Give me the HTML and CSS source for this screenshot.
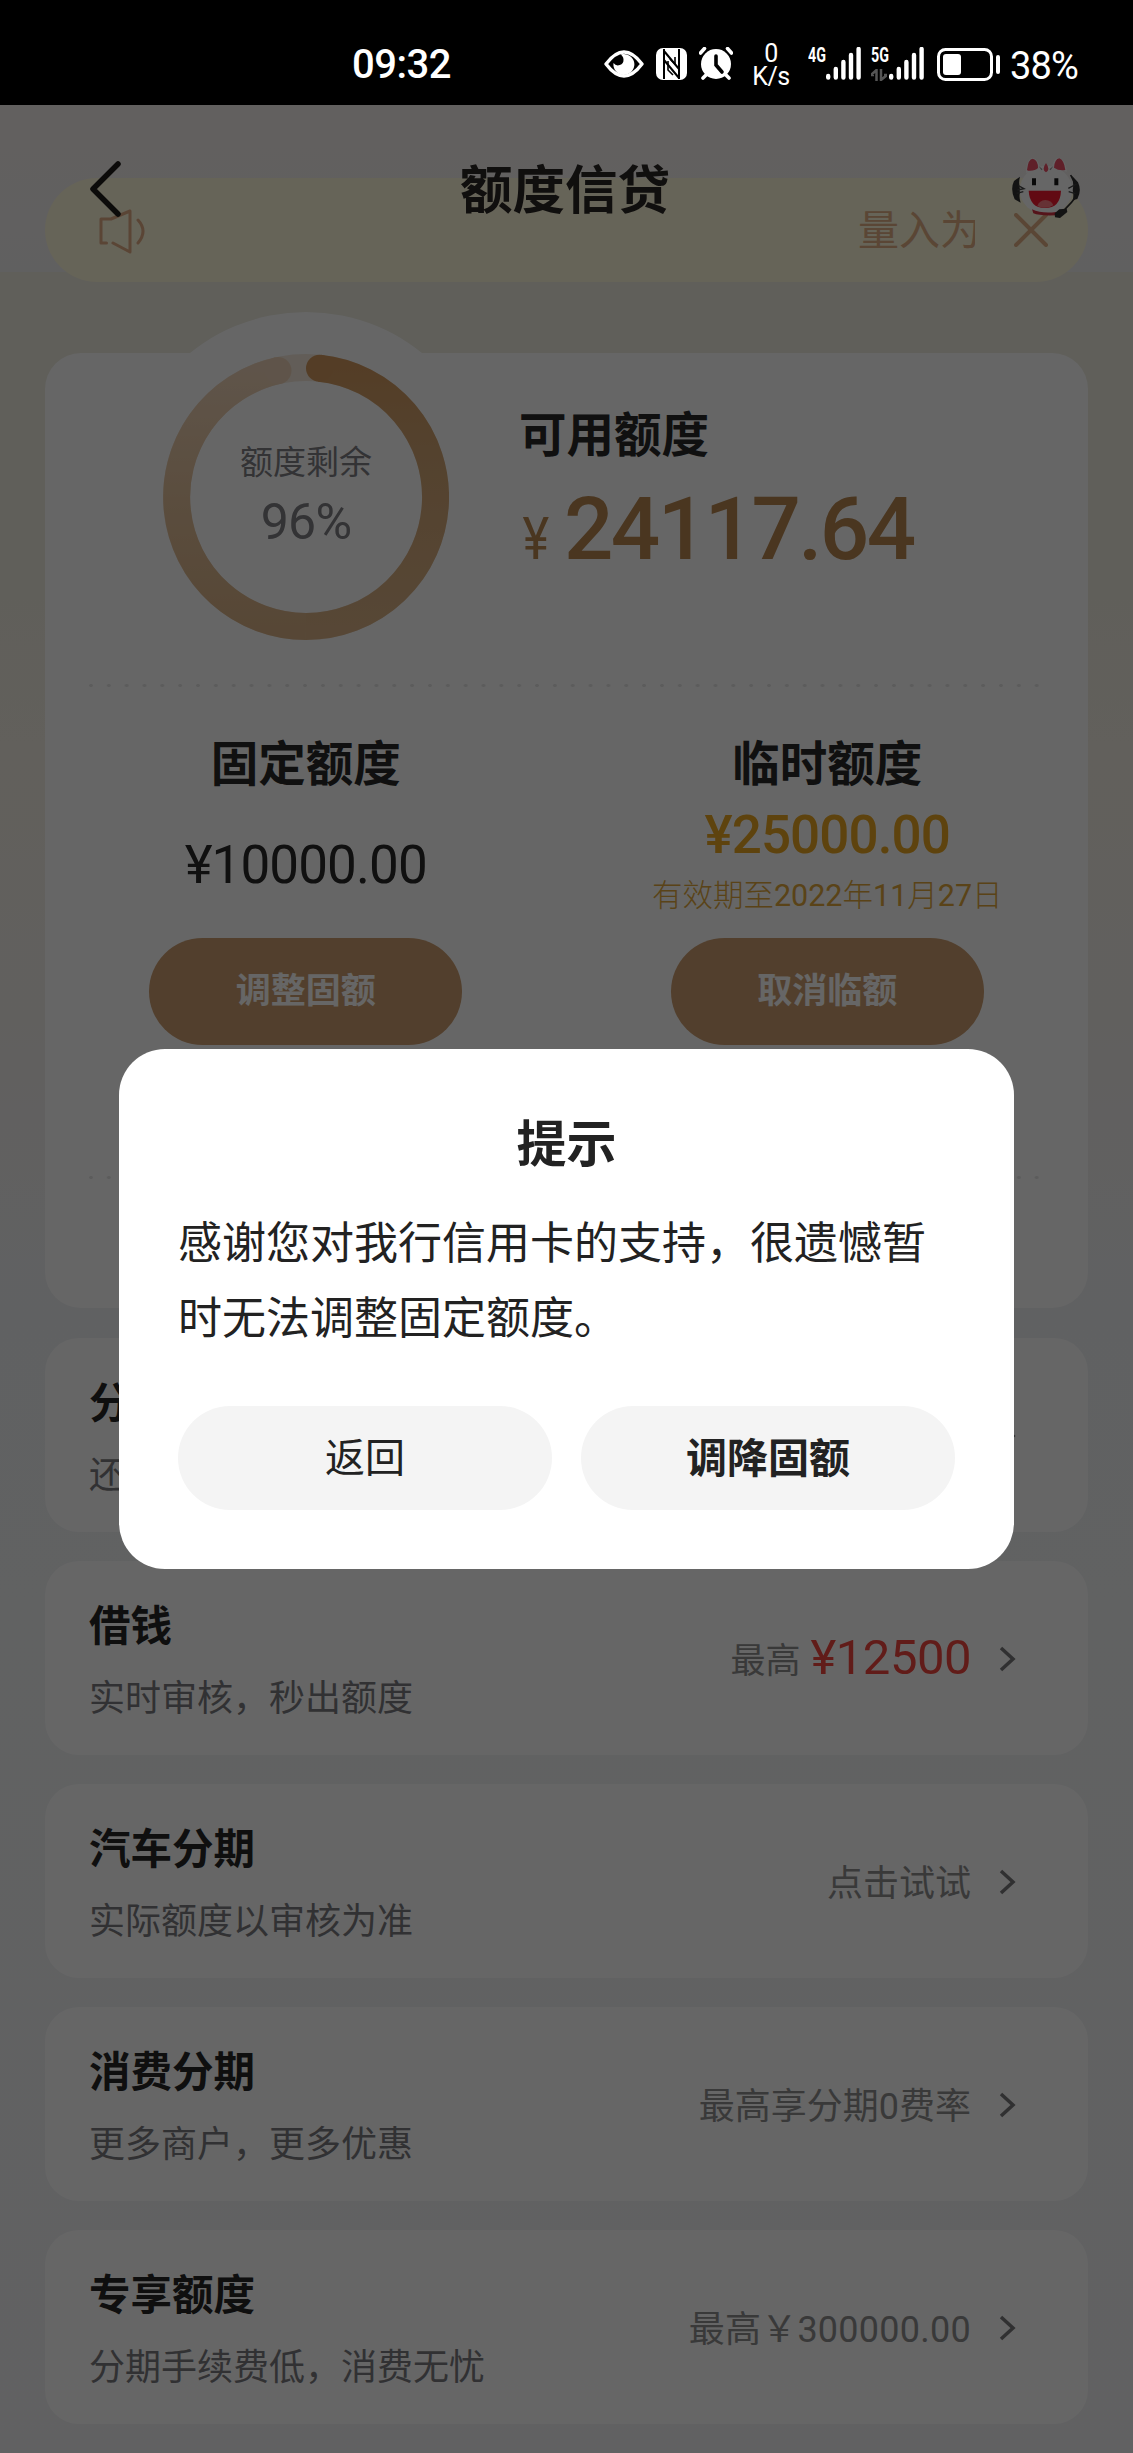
FILE: index.html
```html
<!DOCTYPE html>
<html lang="zh-CN">
<head>
<meta charset="utf-8">
<title>额度信贷</title>
<link rel="stylesheet" href="styles.css">
</head>
<body>
<div class="screen">
  <header class="status">
    <span class="clock">09:32</span>
    <svg class="ic-eye" width="40" height="28" viewBox="0 0 40 28"><path d="M2 14Q20-10 38 14Q20 38 2 14Z" fill="none" stroke="#fff" stroke-width="3.400" stroke-linejoin="round"/><path d="M19 4a10.500 10.500 0 1 1-9.500 9a5.500 5.500 0 0 0 10-3.500c0-2.500-1.500-4-3-5Z" fill="#fff"/></svg>
    <svg class="ic-nfc" width="31" height="32" viewBox="0 0 31 32"><rect width="31" height="32" rx="7" fill="#fff"/><path d="M8 1v30M23 1v30M8 3l15 18M8 12l15 18" fill="none" stroke="#000" stroke-width="2"/><path d="M12 13v9l5 5M19 9v7l-5-5" fill="none" stroke="#000" stroke-width="1.600"/></svg>
    <svg class="ic-alarm" width="34" height="33" viewBox="0 0 34 33"><circle cx="17" cy="17" r="15" fill="#fff"/><path d="M1.500 6l4-4.500M32.500 6l-4-4.500M4 31l4-4M30 31l-4-4" stroke="#fff" stroke-width="3.600" stroke-linecap="round"/><path d="M17 9v9l6 7" fill="none" stroke="#000" stroke-width="3.600" stroke-linecap="round"/></svg>
    <span class="speed"><span>0</span><span>K/s</span></span>
    <span class="net net-4g">
      <span class="gen">4G</span>
    </span>
    <svg class="ic-bars" width="35" height="33" viewBox="0 0 35 33"><path d="M2.200 29v1.500M9.800 22v8.500M17.400 15v15.500M25 8v22.500M32.600 2v28.500" stroke="#fff" stroke-width="4.400" stroke-linecap="round"/></svg>
    <span class="net net-5g">
      <span class="gen">5G</span>
      <svg width="16" height="12" viewBox="0 0 16 12"><path d="M5.500 12V1L0 6h3M10 0v11l6-5h-3" stroke="#555" stroke-width="2.500" fill="none"/></svg>
    </span>
    <svg class="ic-bars" width="35" height="33" viewBox="0 0 35 33"><path d="M2.200 29v1.500M9.800 22v8.500M17.400 15v15.500M25 8v22.500M32.600 2v28.500" stroke="#fff" stroke-width="4.400" stroke-linecap="round"/></svg>
    <svg class="ic-battery" width="64" height="34" viewBox="0 0 64 34"><rect x="1.500" y="1.500" width="53" height="30" rx="7" fill="none" stroke="#fff" stroke-width="3"/><rect x="6" y="6" width="18" height="21" rx="3" fill="#fff"/><path d="M61 9v15" stroke="#fff" stroke-width="4" stroke-linecap="round"/></svg>
    <span class="percent">38%</span>
  </header>

  <nav class="nav">
    <svg class="back" width="34" height="58" viewBox="0 0 34 58"><path d="M29 4L4 29L29 54" fill="none" stroke="#201d1a" stroke-width="5.500" stroke-linecap="round" stroke-linejoin="round"/></svg>
    <h1>额度信贷</h1>
    <svg class="mascot" width="72" height="65" viewBox="30 30 216 195">
      <path d="M60 95l-18 13q-12 25 2 55l18 10q-7-20 0-36q-8-20-2-42zM216 92l18 20q12 25-2 50l-14 4q4-14 0-30q4-20-2-44z" fill="#303030"/>
      <ellipse cx="138" cy="135" rx="79" ry="73" fill="#fff"/>
      <path d="M78 84q2-44 20-45q18 4 22 30zM156 68q4-29 20-30q20 3 25 42z" fill="#fff"/>
      <path d="M81 75q4-34 17-34q16 4 16 28q-10 10-30 8zM162 68q2-26 16-28q14 5 18 35q-20 3-34-7zM138 54q14 20 0 28q-14-8 0-28z" fill="#ee5068"/>
      <path d="M116 63l8 13l4-3zM160 63l-8 13l-4-3z" fill="#999"/>
      <path d="M96 100h12v21h-12zM163 100h12v21h-12z" fill="#181818"/>
      <path d="M86 137h97q-2 52-48 52t-49-52z" fill="#f51930"/>
      <path d="M112 183q6-17 24-18q18 1 24 16q-24 14-48 2z" fill="#ff7d84"/>
      <path d="M55 122l17 9l-20 4M70 140l-20 5M205 130l24-13M206 140l20 6" stroke="#444" stroke-width="4" fill="none"/>
      <path d="M96 193q30 14 72 8v10q-50 2-68-6z" fill="#d53243"/>
      <path d="M232 150q-16 22-38 44M212 90l14 28" stroke="#303030" stroke-width="5" fill="none"/>
      <path d="M164 205l14-12l22-2l2 10l-22 18l-15-2z" fill="#303030"/>
    </svg>
  </nav>

  <main class="content">
    <section class="notice">
      <svg class="speaker" width="50" height="46" viewBox="0 0 50 46"><path d="M8.500 35H3V11H13L32 3V44L15 35M40 12q10 11 0 23" fill="none" stroke="#e1ac86" stroke-width="3" stroke-linecap="round" stroke-linejoin="round"/></svg>
      <div class="marquee"><span>量入为</span></div>
      <svg class="close" width="34" height="34" viewBox="0 0 34 34"><path d="M2 2L32 32M32 2L2 32" stroke="#e1b086" stroke-width="4" stroke-linecap="round"/></svg>
    </section>

    <section class="summary">
      <div class="overview">
        <div class="ring">
          <svg width="286" height="286" viewBox="0 0 286 286">
            <defs>
              <linearGradient id="right" x1="0" y1="0" x2="0" y2="1"><stop offset="0" stop-color="#d29a60"/><stop offset=".3" stop-color="#d2a573"/><stop offset="1" stop-color="#d9b287"/></linearGradient>
              <linearGradient id="left" x1="0" y1="0" x2="0" y2="1"><stop offset="0" stop-color="#eed3b8"/><stop offset=".5" stop-color="#e3c19c"/><stop offset="1" stop-color="#d9b287"/></linearGradient>
            </defs>
            <circle cx="143" cy="143" r="129.500" fill="none" stroke="#f4e9dc" stroke-width="27"/>
            <g fill="none" stroke-width="27">
              <path d="M115 16.600A129.500 129.500 0 0 0 143 272.500" stroke="url(#left)"/>
              <path d="M156.500 14.200A129.500 129.500 0 0 1 143 272.500" stroke="url(#right)"/>
            </g>
            <circle cx="115" cy="16.600" r="13.500" fill="#eed3b8"/>
            <circle cx="156.500" cy="14.200" r="13.500" fill="#d29a60"/>
          </svg>
          <div class="ring-text"><span class="ring-label">额度剩余</span><span class="ring-value">96%</span></div>
        </div>
        <div class="available">
          <h2>可用额度</h2>
          <p class="amount"><span class="yen">¥</span><span class="num">24117.64</span></p>
        </div>
      </div>
      <div class="dots"></div>
      <div class="limits">
        <div class="limit">
          <h2>固定额度</h2>
          <p class="money">¥10000.00</p>
          <a class="pill">调整固额</a>
        </div>
        <div class="limit">
          <h2>临时额度</h2>
          <p class="money temp">¥25000.00</p>
          <p class="until">有效期至<b>2022</b>年<b>11</b>月<b>27</b>日</p>
          <a class="pill">取消临额</a>
        </div>
      </div>
      <div class="dots"></div>
    </section>

    <section class="item">
      <div class="desc"><h3>分期</h3><p>还款</p></div>
      <div class="more"><svg class="chev" width="18" height="28" viewBox="0 0 18 28"><path d="M3 3L15 14L3 25"/></svg></div>
    </section>
    <section class="item">
      <div class="desc"><h3>借钱</h3><p>实时审核，秒出额度</p></div>
      <div class="more"><span class="top">最高</span><span class="red">¥12500</span><svg class="chev" width="18" height="28" viewBox="0 0 18 28"><path d="M3 3L15 14L3 25"/></svg></div>
    </section>
    <section class="item">
      <div class="desc"><h3>汽车分期</h3><p>实际额度以审核为准</p></div>
      <div class="more"><span>点击试试</span><svg class="chev" width="18" height="28" viewBox="0 0 18 28"><path d="M3 3L15 14L3 25"/></svg></div>
    </section>
    <section class="item">
      <div class="desc"><h3>消费分期</h3><p>更多商户，更多优惠</p></div>
      <div class="more"><span>最高享分期0费率</span><svg class="chev" width="18" height="28" viewBox="0 0 18 28"><path d="M3 3L15 14L3 25"/></svg></div>
    </section>
    <section class="item">
      <div class="desc"><h3>专享额度</h3><p>分期手续费低，消费无忧</p></div>
      <div class="more"><span class="sum">最高￥300000.00</span><svg class="chev" width="18" height="28" viewBox="0 0 18 28"><path d="M3 3L15 14L3 25"/></svg></div>
    </section>
  </main>

  <div class="scrim">
    <div class="dialog">
      <h2>提示</h2>
      <p>感谢您对我行信用卡的支持，很遗憾暂时无法调整固定额度。</p>
      <div class="actions"><button>返回</button><button class="strong">调降固额</button></div>
    </div>
  </div>
</div>
</body>
</html>
```
FILE: styles.css
```css
* { box-sizing: border-box; margin: 0; padding: 0; }
body { background: #000; font-family: Roboto, "Noto Sans CJK SC", sans-serif; }
h1, h2, h3 { font-weight: 700; white-space: nowrap; }
p, span { white-space: nowrap; }

.screen {
  position: relative; width: 1133px; height: 2453px; overflow: hidden;
  background: linear-gradient(180deg, #f5f0ed 105px, #f1eff0 272px, #efede1 272px, #efede0 500px, #f4efe5 744px, #f3f0ec 1020px, #f1f3f6 1320px, #f2f4f6 1600px, #f2f3f6 2453px);
}

/* status bar */
.status { display: flex; align-items: flex-start; height: 105px; background: #000; color: #fff; position: relative; z-index: 3; }
.clock { width: 252px; margin-left: 352px; margin-top: 41px; font-size: 40px; line-height: 48px; font-weight: 500; letter-spacing: -.5px; }
.status svg { flex: none; }
.ic-eye { margin-top: 50px; }
.ic-nfc { margin: 48px 0 0 12px; }
.ic-alarm { margin: 47px 0 0 12px; }
.speed { display: flex; flex-direction: column; align-items: center; width: 40px; margin: 42px 0 0 18px; font-size: 25px; line-height: 23px; font-weight: 400; letter-spacing: -.4px; }
.net { display: flex; flex-direction: column; width: 19px; margin-top: 44px; font-size: 21px; font-weight: 700; line-height: 22px; }
.net .gen { display: block; transform: scaleX(.68); transform-origin: 0 0; }
.net svg { margin-top: 3px; }
.net-4g { margin-left: 17px; }
.net-5g { margin-left: 10px; }
.ic-bars { margin: 47px 0 0 -1px; }
.ic-battery { margin: 48px 0 0 13px; }
.percent { margin: 43px 0 0 9px; font-size: 38px; line-height: 46px; font-weight: 400; letter-spacing: -.8px; }

/* title bar floats over the scrolled content */
.nav { position: absolute; z-index: 1; top: 105px; left: 0; width: 1133px; height: 167px; display: flex; justify-content: space-between; align-items: center; padding: 0 51px 0 89px; color: #2a2623; }
.nav h1 { font-size: 52.500px; line-height: 60px; margin: 4px 0 0 -3px; }
.mascot { margin-top: -2px; }

.content { padding: 73px 45px 0; }

.notice { display: flex; align-items: center; height: 104px; padding: 0 40px 0 53px; border-radius: 52px; background: #fff9dc; }
.speaker { margin-top: 2px; }
.marquee { flex: 1; margin: 2px 39px 0 40px; overflow: hidden; display: flex; padding-left: 670px; color: #e0ae84; font-size: 41px; line-height: 60px; }
.close { margin-right: 0; }

/* quota summary */
.summary { position: relative; height: 955px; margin-top: 71px; background: #fff; border-radius: 36px; color: #2a2a2a; }
.summary::before { content: ""; position: absolute; z-index: 0; left: 76px; top: -41px; width: 370px; height: 370px; border-radius: 50%; background: #fff; }
.summary > * { position: relative; }
.overview { display: flex; height: 331px; padding: 1px 0 0 118px; }
.ring { display: grid; width: 286px; height: 286px; }
.ring > * { grid-area: 1 / 1; }
.ring-text { display: flex; flex-direction: column; align-items: center; padding-top: 86px; color: #808085; }
.ring-label { font-size: 33px; line-height: 46px; }
.ring-value { font-size: 50px; line-height: 60px; margin-top: 6px; letter-spacing: -.8px; }
.available { margin-left: 70px; padding-top: 53px; }
.available h2, .limit h2 { font-size: 47.500px; line-height: 58px; }
.amount { display: flex; align-items: baseline; height: 100px; margin-top: 14px; line-height: 100px; color: #b98851; font-weight: 500; }
.yen { font-size: 59px; width: 46px; padding-left: 4px; font-weight: 400; transform: scaleX(.86); transform-origin: 0 0; }
.num { font-size: 87px; letter-spacing: -2.600px; margin-left: -1px; }
.dots { height: 3px; margin: 0 40px 0 37px; background: radial-gradient(circle, #e6e6e6 1.500px, transparent 2px) 0 0 / 17.850px 3px repeat-x; }
.limits { display: flex; height: 489px; padding-top: 49px; }
.limit { flex: 1; display: flex; flex-direction: column; align-items: center; position: relative; }
.limit .money { font-size: 53px; line-height: 60px; margin-top: 41px; letter-spacing: -.9px; }
.limit .temp { margin-top: 11px; color: #eba825; font-weight: 500; }
.until { height: 36px; margin-top: 13px; font-size: 30.500px; line-height: 36px; font-weight: 300; color: #e1a83c; }
.until b { font-weight: 400; }
.pill { display: block; width: 313px; height: 107px; border-radius: 54px; background: #cd9e70; color: #fff; font-size: 35px; font-weight: 700; line-height: 108px; text-align: center; margin-top: 43px; }
.until + .pill { margin-top: 24px; }

/* product rows */
.item { display: flex; justify-content: space-between; height: 194px; margin-top: 29px; padding: 0 72px 0 44px; background: #fff; border-radius: 34px; }
.summary + .item { margin-top: 30px; }
.desc { padding-top: 39px; }
.desc h3 { font-size: 41.500px; line-height: 54px; color: #262626; }
.desc p { margin-top: 20px; font-size: 36px; line-height: 50px; color: #7b7b80; }
.more { display: flex; align-items: center; height: 196px; font-size: 36px; color: #8f8f90; }
.more span { margin-top: -4px; }
.top { font-size: 35px; margin-right: 10px; }
.red { font-size: 49px; color: #f2473f; letter-spacing: -.5px; }
.sum { letter-spacing: .25px; }
.chev { margin-left: 27px; fill: none; stroke: #78787a; stroke-width: 3.500; }

/* dialog */
.scrim { position: absolute; z-index: 2; top: 105px; left: 0; width: 1133px; height: 2348px; background: rgba(0, 0, 0, .6); display: flex; justify-content: center; align-items: flex-start; padding-top: 944px; }
.dialog { width: 895px; height: 520px; padding: 66px 59px 0; border-radius: 46px; background: #fff; color: #222; }
.dialog h2 { font-size: 50px; line-height: 60px; text-align: center; }
.dialog p { margin-top: 32px; font-size: 44px; line-height: 75px; white-space: normal; width: 760px; }
.actions { display: flex; gap: 29px; margin-top: 49px; }
.actions button { width: 374px; height: 104px; padding-top: 2px; border: 0; border-radius: 52px; background: #f4f4f4; color: #222; font: 400 40px/102px Roboto, "Noto Sans CJK SC", sans-serif; }
.actions .strong { font-weight: 700; font-size: 41px; }
```
